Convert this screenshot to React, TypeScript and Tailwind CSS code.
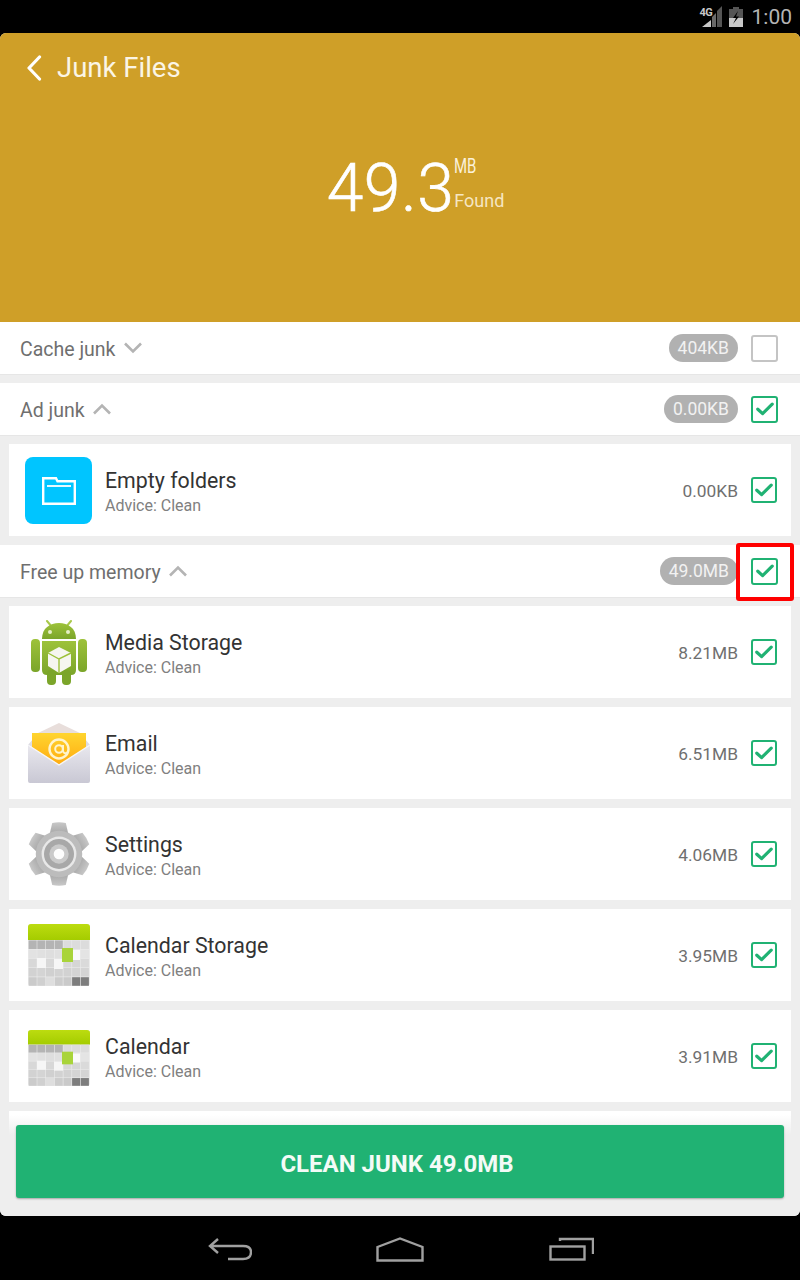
import React from "react";

const Check = ({ on = true, big = false }: { on?: boolean; big?: boolean }) => (
  <div className={`box-border flex shrink-0 items-center justify-center rounded-[3px] border-2 bg-white ${big ? "h-[27px] w-[27px]" : "h-[26px] w-[26px]"} ${on ? "border-[#20b273]" : "border-[#c4c4c4]"}`}>
    {on && (
      <svg width="18" height="14" viewBox="0 0 18 14" fill="none">
        <path d="M1.8 7.2 L6.6 11.6 L16.2 2.2" stroke="#20b273" strokeWidth="3.2" strokeLinecap="round" strokeLinejoin="round" />
      </svg>
    )}
  </div>
);

const Section = ({ title, up, size, on, mark }: { title: string; up: boolean; size: string; on: boolean; mark?: boolean }) => (
  <div className="relative flex h-[53px] shrink-0 items-center border-b border-[#e6e6e6] bg-white pl-5 pr-[22px]">
    <span className="pt-[3px] text-[19.5px] text-[#6f6f6f]">{title}</span>
    <svg className="ml-[7px]" width="20" height="12" viewBox="0 0 20 12" fill="none">
      <path d={up ? "M2 10.5 L10 2.5 L18 10.5" : "M2 1.5 L10 9.5 L18 1.5"} stroke="#b4b4b4" strokeWidth="2.6" />
    </svg>
    <div className="ml-auto mr-[13px] flex h-[28px] items-center rounded-full bg-[#b1b1b1] px-[9px] text-[17.5px] text-[#f2f2f2]">{size}</div>
    <Check on={on} big />
    {mark && <div className="absolute left-[736px] top-[-2px] h-[58px] w-[58px] rounded-[3px] border-4 border-[#ff0000]" />}
  </div>
);

const Row = ({ icon, name, size }: { icon: React.ReactNode; name: string; size: string }) => (
  <div className="mx-[9px] flex h-[92px] shrink-0 items-center bg-white pr-[14px]">
    <div className="flex w-[96px] shrink-0 items-center justify-center pl-[3px]">{icon}</div>
    <div className="flex flex-col pt-[5px]">
      <span className="text-[21.33px] leading-[26px] text-[#333333]">{name}</span>
      <span className="text-[16px] leading-[23px] text-[#808080]">Advice: Clean</span>
    </div>
    <span className="ml-auto mr-[13px] pt-[3px] text-[17.33px] text-[#6f6f6f]">{size}</span>
    <Check />
  </div>
);

const FolderIcon = () => (
  <div className="flex h-[67px] w-[67px] items-center justify-center rounded-[8px] bg-[#00c5ff]">
    <svg className="translate-y-[1px]" width="34" height="28" viewBox="0 0 34 28" fill="none">
      <path d="M1.2 26.8 V1.2 H14 L15.5 4.2 H32.8 V26.8 Z" stroke="#fff" strokeWidth="2.4" fill="none" />
      <path d="M5 9 H29" stroke="#fff" strokeWidth="1.8" />
    </svg>
  </div>
);

const AndroidIcon = () => (
  <svg width="56" height="65" viewBox="0 0 56 65">
    <defs>
      <linearGradient id="ag" x1="0" y1="0" x2="0" y2="1">
        <stop offset="0" stopColor="#9dc23a" />
        <stop offset="1" stopColor="#7ba52a" />
      </linearGradient>
    </defs>
    <path d="M16 1 L21 7 M40 1 L35 7" stroke="#a9c94a" strokeWidth="2" strokeLinecap="round" />
    <path d="M11 19 C11 8 19 3 28 3 C37 3 45 8 45 19 Z" fill="url(#ag)" />
    <circle cx="19" cy="12" r="2" fill="#e6efc6" />
    <circle cx="37" cy="12" r="2" fill="#e6efc6" />
    <path d="M11 21 H45 V50 Q45 55 40 55 H16 Q11 55 11 50 Z" fill="url(#ag)" />
    <rect x="0" y="19" width="9" height="33" rx="4" fill="url(#ag)" />
    <rect x="47" y="19" width="9" height="33" rx="4" fill="url(#ag)" />
    <rect x="16" y="50" width="9" height="15" rx="4" fill="#7ba52a" />
    <rect x="31" y="50" width="9" height="15" rx="4" fill="#7ba52a" />
    <path d="M28 27 L40 33 V46 L28 53 L17 46 V33 Z" fill="#f6f6f0" />
    <path d="M17 33 L28 39 L40 33 M28 39 V53" stroke="#9dc23a" strokeWidth="1.4" fill="none" />
  </svg>
);

const EmailIcon = () => (
  <svg width="62" height="60" viewBox="0 0 62 60">
    <defs>
      <linearGradient id="eg" x1="0" y1="0" x2="0" y2="1">
        <stop offset="0" stopColor="#ffd52f" />
        <stop offset="1" stopColor="#ffa90f" />
      </linearGradient>
      <linearGradient id="ev" x1="0" y1="0" x2="0" y2="1">
        <stop offset="0" stopColor="#e9e8ee" />
        <stop offset="1" stopColor="#c9c8d4" />
      </linearGradient>
    </defs>
    <path d="M31 0 L52 10 H10 Z" fill="#e8dedb" />
    <path d="M0 22 L5 16 V40 H57 V16 L62 22 V30 H0 Z" fill="#dddce3" />
    <rect x="4" y="10" width="54" height="34" fill="url(#eg)" />
    <circle cx="31" cy="26" r="9.5" fill="none" stroke="#fff4cc" strokeWidth="2.4" />
    <circle cx="31" cy="26" r="3.8" fill="none" stroke="#fff4cc" strokeWidth="2" />
    <path d="M35 22 V28 Q36 32 40 29" fill="none" stroke="#fff4cc" strokeWidth="2" />
    <path d="M0 22 L31 42 L62 22 V58 Q62 60 60 60 H2 Q0 60 0 58 Z" fill="url(#ev)" />
    <path d="M0 22 L31 42 L62 22" fill="none" stroke="#f6f6f8" strokeWidth="1.4" />
  </svg>
);

const GearIcon = () => {
  const teeth = [0, 60, 120, 180, 240, 300];
  return (
    <svg width="62" height="64" viewBox="0 0 64 66">
      <defs>
        <linearGradient id="gg" x1="0" y1="0" x2="0" y2="1">
          <stop offset="0" stopColor="#c8c8c8" />
          <stop offset="1" stopColor="#a2a2a2" />
        </linearGradient>
      </defs>
      {teeth.map((a) => (
        <path key={a} d="M25 1 Q32 -0.5 39 1 L42 14 H22 Z" fill="url(#gg)" transform={`rotate(${a} 32 33)`} />
      ))}
      <circle cx="32" cy="33" r="24" fill="#bcbcbc" />
      <circle cx="32" cy="33" r="18" fill="#e8e8e8" />
      <circle cx="32" cy="33" r="15.5" fill="#a8a8a8" />
      <circle cx="32" cy="33" r="10" fill="#cacaca" />
      <circle cx="32" cy="33" r="5.5" fill="#fdfdfd" />
    </svg>
  );
};

const CalendarIcon = ({ squat = false }: { squat?: boolean }) => {
  const fills = [
    ["#b4b4b4", "#b4b4b4", "#b4b4b4", "#b4b4b4", "#dcdcdc", "#dcdcdc", "#dcdcdc"],
    ["#e2e2e2", "#e0e0e0", "#dedede", "#e0e0e0", "#dedede", "#e2e2e2", "#e4e4e4"],
    ["#d8d8d8", "#d6d6d6", "#d8d8d8", "#d6d6d6", "#d8d8d8", "#d6d6d6", "#dadada"],
    ["#d2d2d2", "#d4d4d4", "#d0d0d0", "#d2d2d2", "#d2d2d2", "#d4d4d4", "#d4d4d4"],
    ["#cbcbcb", "#d0d0d0", "#dedede", "#cccccc", "#cacaca", "#7d7d7d", "#7d7d7d"],
  ];
  return (
    <svg className={squat ? "mt-[3px] h-[56px]" : "h-[62px]"} width="62" viewBox="0 0 62 62" preserveAspectRatio="none">
      <defs>
        <linearGradient id="cg" x1="0" y1="0" x2="0" y2="1">
          <stop offset="0" stopColor="#bcdc10" />
          <stop offset="1" stopColor="#a4cc00" />
        </linearGradient>
      </defs>
      <rect x="0" y="0" width="62" height="62" rx="3" fill="#ececec" />
      <path d="M0 16 V3 Q0 0 3 0 H59 Q62 0 62 3 V16 Z" fill="url(#cg)" />
      {fills.map((r, i) =>
        r.map((c, j) => <rect key={`${i}-${j}`} x={j * 8.7 + 0.6} y={i * 9.2 + 16.4} width="8.1" height="8.6" fill={c} />)
      )}
      <rect x="9" y="34" width="9" height="10" fill="#f6f6f6" />
      <rect x="26" y="35" width="9" height="10" fill="#f6f6f6" />
      <rect x="44" y="26" width="8" height="10" fill="#fafafa" />
      <rect x="34" y="24" width="11" height="14" fill="#a9d43a" />
    </svg>
  );
};

export default function App() {
  return (
    <div className="flex h-[1280px] w-[800px] flex-col overflow-hidden bg-black font-['Roboto',sans-serif]">
      {/* Status bar */}
      <div className="flex h-[33px] shrink-0 items-center justify-end pr-[8px] text-[#b4b4b4]">
        <div className="relative mr-[7px] h-[21px] w-[22px]">
          <svg className="absolute left-0 top-0" width="22" height="21" viewBox="0 0 22 21">
            <path d="M22 0 V21 H17 V5 Z" fill="#555" />
            <path d="M16 7 V21 H12 V11 Z" fill="#6a6a6a" />
            <path d="M11 14 V21 H2 Z" fill="#c8c8c8" />
          </svg>
          <span className="absolute left-0 top-[1px] text-[11px] font-bold leading-[11px] tracking-[-0.6px] text-[#c8c8c8]">4G</span>
        </div>
        <svg className="mr-[9px]" width="14" height="20" viewBox="0 0 14 20">
          <path d="M4 0 H10 V2 H14 V20 H0 V2 H4 Z" fill="#555" />
          <path d="M0 11 H14 V20 H0 Z" fill="#c8c8c8" />
          <path d="M9 4 L4 11 H7 L4 17 L10 9.5 H7 Z" fill="#000" />
        </svg>
        <span className="text-[21px] leading-[20px]">1:00</span>
      </div>

      {/* App */}
      <div className="relative flex min-h-0 flex-1 flex-col overflow-hidden rounded-[6px] bg-[#eeeeee]">
        <div className="relative h-[289px] shrink-0 bg-[#cf9f28] text-white">
          <div className="flex items-center pl-[26px] pt-[18px]">
            <svg width="16" height="26" viewBox="0 0 16 26" fill="none">
              <path d="M13.5 2 L3 13 L13.5 24" stroke="#fff" strokeWidth="3.2" strokeLinecap="round" strokeLinejoin="round" />
            </svg>
            <span className="ml-[15px] text-[27.5px] leading-[34px] text-[#fbf5e6]">Junk Files</span>
          </div>
          <div className="mt-[65px] flex justify-center pl-[31px]">
            <span className="text-[66px] font-light leading-[78px] tracking-[0.5px] [-webkit-text-stroke:0.6px_white]">49.3</span>
            <div className="flex flex-col pt-[3px]">
              <span className="origin-left scale-x-75 text-[20px] leading-[26px] text-[#fbf1da]">MB</span>
              <span className="mt-[11px] text-[18px] leading-[22px] text-[#f6e6c2]">Found</span>
            </div>
          </div>
        </div>

        <div className="flex flex-col gap-[8px]">
          <Section title="Cache junk" up={false} size="404KB" on={false} />
          <Section title="Ad junk" up size="0.00KB" on />
        </div>
        <div className="mt-[8px] flex flex-col gap-[9px]">
          <Row icon={<FolderIcon />} name="Empty folders" size="0.00KB" />
          <div className="-mb-px">
            <Section title="Free up memory" up size="49.0MB" on mark />
          </div>
          <Row icon={<AndroidIcon />} name="Media Storage" size="8.21MB" />
          <Row icon={<EmailIcon />} name="Email" size="6.51MB" />
          <Row icon={<GearIcon />} name="Settings" size="4.06MB" />
          <Row icon={<CalendarIcon />} name="Calendar Storage" size="3.95MB" />
          <Row icon={<CalendarIcon squat />} name="Calendar" size="3.91MB" />
          <div className="mx-[9px] h-[92px] shrink-0 bg-white" />
        </div>

        {/* Floating clean button */}
        <div className="absolute inset-x-0 bottom-0 h-[101px] bg-[linear-gradient(to_bottom,rgba(238,238,238,0)_0px,#eeeeee_20px)] px-[16px] pt-[10px]">
          <div className="flex h-[73px] items-center justify-center rounded-[3px] bg-[#20b273] pr-[6px] pt-[5px] text-[24px] font-bold text-[#f4fbf7] shadow-[0_1px_2px_rgba(0,0,0,0.3)]">
            CLEAN JUNK 49.0MB
          </div>
        </div>
      </div>

      {/* Nav bar */}
      <div className="flex h-[64px] shrink-0 items-start justify-center pl-[2px] pt-[21px]">
        <svg className="mr-[124px]" width="44" height="24" viewBox="0 0 44 24" fill="none" stroke="#a0a0a0" strokeWidth="2.4">
          <path d="M10 2 L2 9 L10 16 M2 9 H35 Q43 9 43 15 Q43 22 35 22 H20" />
        </svg>
        <svg className="mr-[125px]" width="48" height="25" viewBox="0 0 48 25" fill="none" stroke="#a0a0a0" strokeWidth="2.4">
          <path d="M1.5 10 L24 1.5 L46.5 10 V23.5 H1.5 Z" />
        </svg>
        <svg width="45" height="24" viewBox="0 0 45 24" fill="none" stroke="#a0a0a0" strokeWidth="2.4">
          <path d="M11 4 V2 H44 V17" />
          <rect x="1.5" y="9.5" width="34" height="13" />
        </svg>
      </div>
    </div>
  );
}
